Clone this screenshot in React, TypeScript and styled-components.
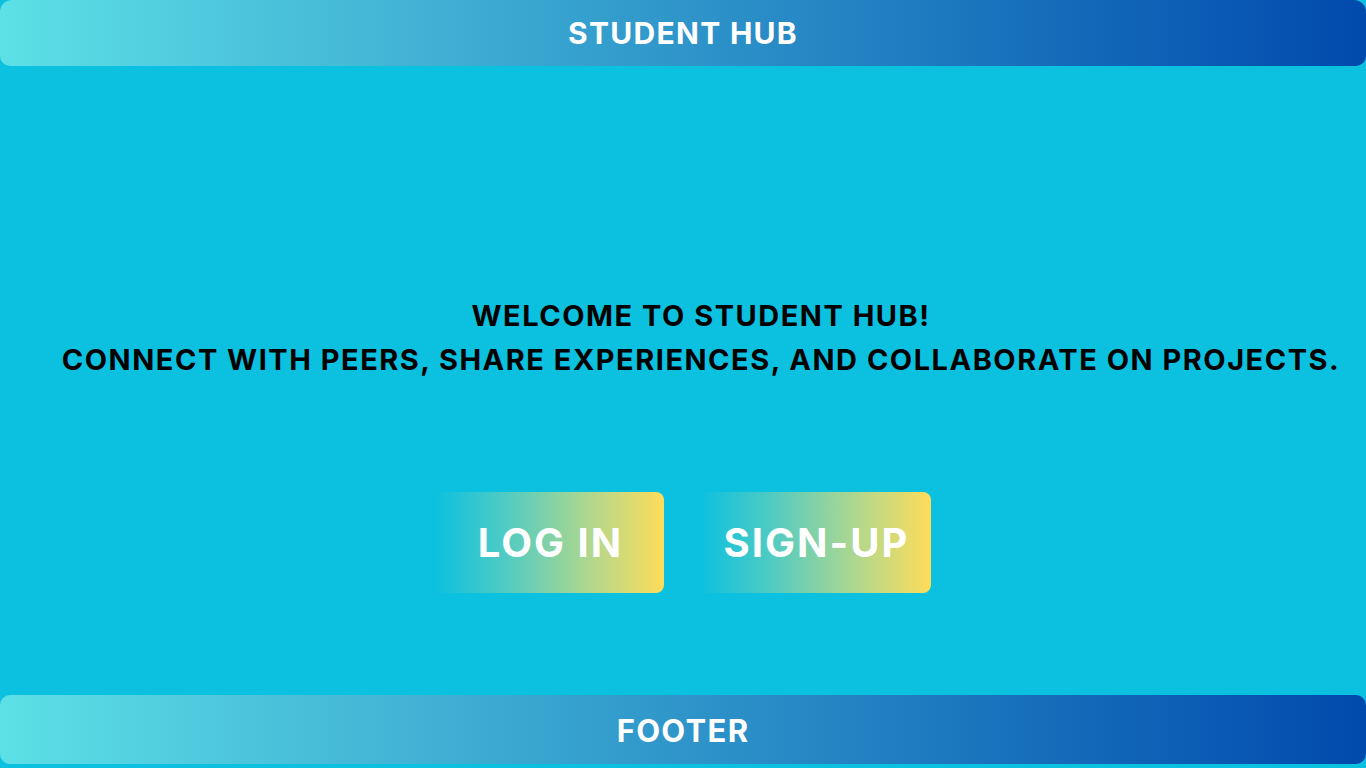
import styled, { createGlobalStyle } from 'styled-components'

const GlobalStyle = createGlobalStyle`
  html, body {
    margin: 0;
    padding: 0;
    height: 100%;
  }
  body {
    background: #0cc0df;
    font-family: Inter, 'Liberation Sans', sans-serif;
  }
`

const Page = styled.div`
  height: 768px;
  display: flex;
  flex-direction: column;
  background: #0cc0df;
  overflow: hidden;
`

const Bar = styled.div<{ $height: number; $size: number }>`
  height: ${(p) => p.$height}px;
  flex: none;
  display: flex;
  align-items: center;
  justify-content: center;
  border-radius: 10px;
  background: linear-gradient(90deg, #5de0e6 0%, #004aad 100%);
  color: #ffffff;
  font-weight: 700;
  font-size: ${(p) => p.$size}px;
  letter-spacing: 1.3px;
`

const Header = styled(Bar)`
  border-top-left-radius: 12px;
  border-top-right-radius: 12px;
`

const Footer = styled(Bar)`
  margin-bottom: 4px;
  padding-top: 1px;
`

const Main = styled.main`
  flex: 1;
  display: flex;
  flex-direction: column;
  align-items: center;
`

const Welcome = styled.div`
  margin-top: 228px;
  padding-left: 36px;
  text-align: center;
  color: #000000;
  font-weight: 700;
  font-size: 29px;
  line-height: 44px;
  letter-spacing: 1.5px;
  white-space: pre;
`

const Actions = styled.div`
  margin-top: 110px;
  display: flex;
  gap: 36px;
`

const ActionButton = styled.button<{ $width: number }>`
  width: ${(p) => p.$width}px;
  height: 101px;
  border: none;
  border-radius: 0 8px 8px 0;
  background: linear-gradient(90deg, rgba(12, 192, 223, 0) 0%, #4ecbc4 30%, #b6d88a 70%, #fedc5a 100%);
  color: #ffffff;
  font-family: Inter, 'Liberation Sans', sans-serif;
  font-weight: 700;
  font-size: 40px;
  letter-spacing: 2px;
  padding: 0 0 0 2px;
  cursor: pointer;
`

export default function App() {
  return (
    <>
      <GlobalStyle />
      <Page>
        <Header $height={66} $size={30}>STUDENT HUB</Header>
        <Main>
          <Welcome>
            {'WELCOME TO STUDENT HUB!\nCONNECT WITH PEERS, SHARE EXPERIENCES, AND COLLABORATE ON PROJECTS.'}
          </Welcome>
          <Actions>
            <ActionButton $width={229}>LOG IN</ActionButton>
            <ActionButton $width={231}>SIGN-UP</ActionButton>
          </Actions>
        </Main>
        <Footer $height={68} $size={31}>FOOTER</Footer>
      </Page>
    </>
  )
}
